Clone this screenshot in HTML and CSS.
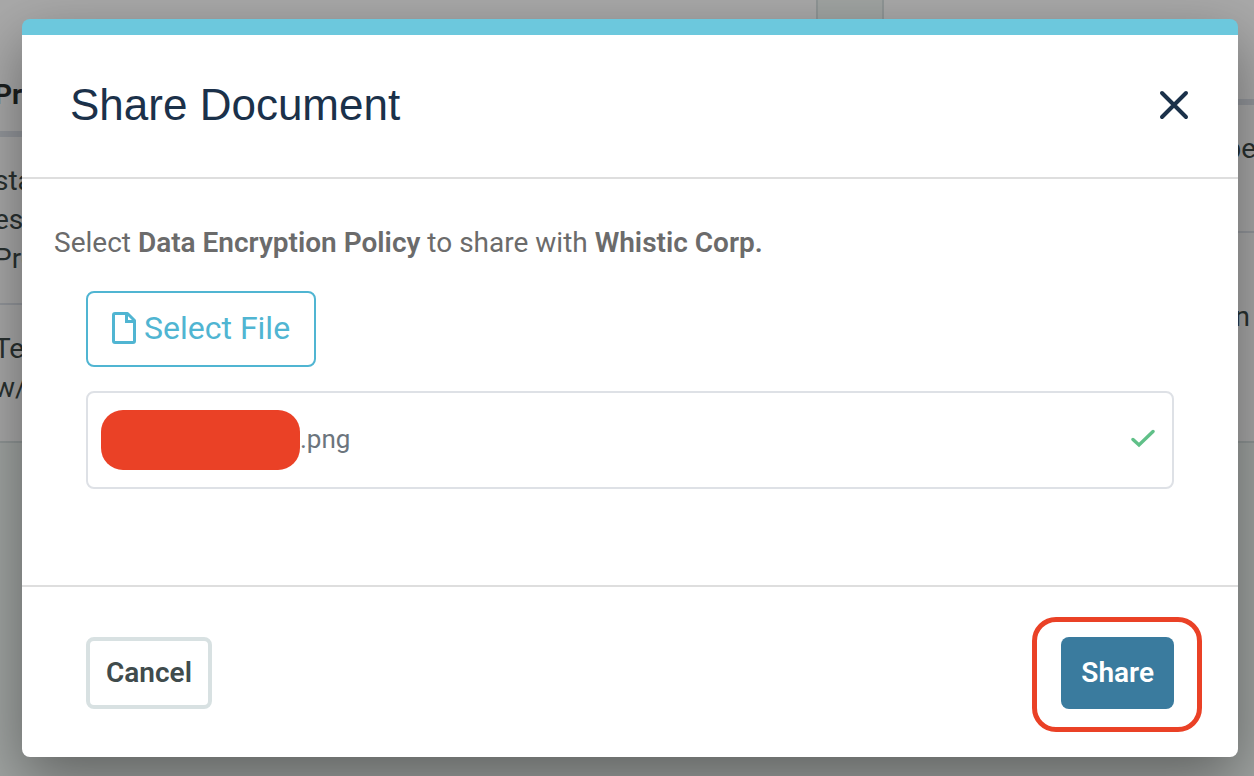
FILE: index.html
```html
<!DOCTYPE html>
<html lang="en">
<head>
<meta charset="utf-8">
<meta name="viewport" content="width=device-width, initial-scale=1">
<title>Share Document</title>
<link rel="stylesheet" href="styles.css">
</head>
<body>
<div class="page" aria-hidden="true">
  <section class="panel panel-left">
    <div class="panel-head"><div class="line">Pro</div></div>
    <div class="panel-row row-tall"><div class="line">sta</div><div class="line">es</div><div class="line">Pro</div></div>
    <div class="panel-row row-mid"><div class="line">Te</div><div class="line">w/</div></div>
  </section>
  <section class="panel panel-right">
    <div class="panel-head"></div>
    <div class="panel-row row-tall"><div class="line">be</div></div>
    <div class="panel-row row-mid"><div>n</div></div>
  </section>
</div>
<div class="overlay">
  <div class="modal" role="dialog" aria-modal="true" aria-labelledby="modal-title">
    <header class="modal-header">
      <h1 class="modal-title" id="modal-title">Share Document</h1>
      <button class="close" type="button" aria-label="Close">
        <svg width="30" height="30" viewBox="0 0 30 30" fill="none" stroke="currentColor" stroke-width="4" stroke-linecap="round"><path d="M3 3L27 27M27 3L3 27"/></svg>
      </button>
    </header>
    <div class="modal-body">
      <p class="lead">Select <strong>Data Encryption Policy</strong> to share with <strong>Whistic Corp.</strong></p>
      <div class="upload">
        <button class="select-file" type="button">
          <svg width="24" height="32" viewBox="0 0 24 32" fill="none" stroke="currentColor" stroke-width="3" stroke-linejoin="round"><path d="M3 1.5H15.5L22.5 8.5V29Q22.5 30.5 21 30.5H3Q1.5 30.5 1.5 29V3Q1.5 1.5 3 1.5Z"/><path d="M14.5 2V9.5H22" stroke-linejoin="miter"/></svg>
          <span>Select File</span>
        </button>
        <div class="file">
          <span class="redacted"></span>
          <span class="file-name">.png</span>
          <svg class="check" width="24" height="24" viewBox="0 0 24 24" fill="none" stroke="currentColor" stroke-width="3.4" stroke-linecap="round"><path d="M2 11.5L8 17L22 3.5"/></svg>
        </div>
      </div>
    </div>
    <footer class="modal-footer">
      <button class="btn cancel" type="button">Cancel</button>
      <button class="btn share" type="button">Share</button>
    </footer>
  </div>
</div>
</body>
</html>
```
FILE: styles.css
```css
* {
  box-sizing: border-box;
}

body {
  margin: 0;
  min-height: 100vh;
  overflow: hidden;
  background: #a0a4a2;
  font-family: Roboto, "Liberation Sans", sans-serif;
  font-size: 28px;
}

button {
  font: inherit;
  cursor: pointer;
}

.page {
  position: absolute;
  inset: 0;
  display: grid;
  grid-template-columns: 818fr 372fr;
  column-gap: 64px;
  align-items: start;
  overflow: hidden;
  color: #293130;
  line-height: 39px;
}

.panel {
  background: #a9a9a9;
  border-bottom: 2px solid #909696;
}

.panel-left {
  border-right: 2px solid #909696;
}

.panel-right {
  border-left: 2px solid #909696;
}

.panel-head {
  height: 137px;
  padding-top: 75px;
  border-bottom: 6px solid #94979c;
  color: #1c1f1f;
  font-weight: 700;
}

.line {
  margin: 0 -6px;
}

.row-tall {
  height: 168px;
  padding-top: 24px;
  border-bottom: 2px solid #94979c;
}

.row-mid {
  height: 136px;
  padding-top: 24px;
}

.panel-right .panel-head {
  height: 105px;
}

.panel-right .panel-row {
  padding-right: 4px;
  text-align: right;
}

.panel-right .row-tall {
  height: 128px;
  padding-right: 4px;
}

.panel-right .row-mid {
  height: 208px;
  padding-top: 64px;
}

.overlay {
  position: relative;
  padding: 19px 16px 19px 22px;
}

.modal {
  overflow: hidden;
  border-top: 16px solid #6cc8dd;
  border-radius: 8px;
  background: #fff;
  box-shadow: 0 22px 60px rgba(0, 0, 0, 0.4);
}

.modal-header {
  display: flex;
  align-items: center;
  justify-content: space-between;
  padding: 43px 49px 45px 48px;
  border-bottom: 2px solid #dedede;
  color: #1b314a;
}

.modal-title {
  margin: 0;
  font-family: "Liberation Sans", Arial, sans-serif;
  font-size: 44px;
  font-weight: 400;
  line-height: 54px;
}

.close {
  display: flex;
  padding: 0;
  border: 0;
  background: none;
  color: inherit;
}

.modal-body {
  padding: 44px 32px 96px;
}

.lead {
  margin: 0 0 28px;
  color: #6b6b6b;
  line-height: 40px;
}

.lead strong {
  font-weight: 600;
}

.upload {
  display: flex;
  flex-direction: column;
  align-items: flex-start;
  gap: 24px;
  padding: 0 32px;
}

.select-file {
  display: flex;
  align-items: center;
  gap: 8px;
  padding: 15px 24px 17px;
  border: 2px solid #50b5d2;
  border-radius: 8px;
  background: #fff;
  color: #50b5d2;
  font-size: 32px;
  line-height: 40px;
}

.file {
  display: flex;
  align-items: center;
  align-self: stretch;
  padding: 17px 17px 17px 13px;
  border: 2px solid #dee1e6;
  border-radius: 8px;
  color: #6c757d;
  font-size: 26px;
}

.file-name {
  padding-bottom: 2px;
}

.redacted {
  width: 199px;
  height: 60px;
  border-radius: 22px;
  background: #ea4126;
}

.check {
  margin-left: auto;
  color: #60c088;
}

.modal-footer {
  display: flex;
  justify-content: space-between;
  padding: 50px 64px 48px;
  border-top: 2px solid #dedede;
}

.btn {
  border-radius: 8px;
  font-weight: 600;
  line-height: 32px;
}

.cancel {
  padding: 16px;
  border: 4px solid #d8e1e2;
  background: #fff;
  color: #404b4c;
}

.share {
  position: relative;
  padding: 20px;
  border: 0;
  background: #3a7b9e;
  color: #fff;
}

.share::after {
  content: "";
  position: absolute;
  inset: -20px -28px -23px -29px;
  border: 5px solid #ea4126;
  border-radius: 24px;
  pointer-events: none;
}
```
